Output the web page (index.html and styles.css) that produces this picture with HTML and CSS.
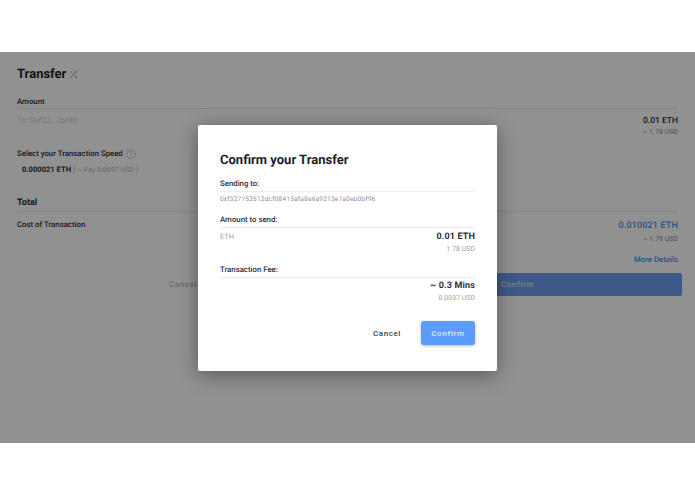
FILE: index.html
```html
<!DOCTYPE html>
<html lang="en">
<head>
  <meta charset="UTF-8">
  <title>Confirm your Transfer</title>
  <link rel="stylesheet" href="styles.css">
</head>
<body>
  <div class="band"></div>
  <main class="screen">
    <section class="page">
      <h1 class="page-title"><span class="title-text">Transfer</span>
        <svg class="shuffle" viewBox="0 0 24 24" width="11" height="11"><path d="M10.6 9.2 5.4 4 4 5.4l5.2 5.2 1.4-1.4zM14.5 4l2 2L4 18.6 5.4 20 18 7.5l2 2V4h-5.5zm.3 9.4-1.4 1.4 3.1 3.1-2 2.1H20v-5.5l-2 2-3.2-3.1z"/></svg>
      </h1>
      <div class="label ruled">Amount</div>
      <div class="row amount-row">
        <span class="to">To: 0xf32...0bf96</span>
        <div class="right">
          <div class="eth">0.01 ETH</div>
          <div class="usd">~ 1.78 USD</div>
        </div>
      </div>
      <div class="label speed-label">Select your Transaction Speed
        <svg class="help" viewBox="0 0 24 24" width="10" height="10"><circle cx="12" cy="12" r="10.5"/><path d="M8.8 9.4a3.2 3.2 0 1 1 4.8 2.8c-1 .6-1.6 1.2-1.6 2.4M12 16.6v2"/></svg>
      </div>
      <div class="speed"><b>0.000021 ETH</b> <span>( ~ Pay 0.0037 USD )</span></div>
      <div class="total ruled">Total</div>
      <div class="row cost-row">
        <span class="label">Cost of Transaction</span>
        <div class="right">
          <div class="eth blue">0.010021 ETH</div>
          <div class="usd">~ 1.79 USD</div>
          <a class="more">More Details</a>
        </div>
      </div>
      <div class="actions">
        <span class="ghost">Cancel</span>
        <span class="wide">Confirm</span>
      </div>
    </section>

    <div class="scrim"></div>

    <section class="modal">
      <h2>Confirm your Transfer</h2>
      <div class="m-label">Sending to:</div>
      <div class="address">0xf327753512dcf08415afa8a6a9213e7a0eb0bf96</div>
      <div class="m-label">Amount to send:</div>
      <div class="m-row">
        <span class="unit">ETH</span>
        <div class="m-right">
          <div class="m-big">0.01 ETH</div>
          <div class="m-small">1.78 USD</div>
        </div>
      </div>
      <div class="m-label">Transaction Fee:</div>
      <div class="m-row fee">
        <span></span>
        <div class="m-right">
          <div class="m-big">~ 0.3 Mins</div>
          <div class="m-small">0.0037 USD</div>
        </div>
      </div>
      <div class="m-actions">
        <button class="m-cancel">Cancel</button>
        <button class="m-confirm">Confirm</button>
      </div>
    </section>
  </main>
  <div class="band-bottom"></div>
</body>
</html>
```
FILE: styles.css
```css
html, body { margin: 0; padding: 0; }
body { width: 695px; height: 494px; overflow: hidden; background: #fff; font-family: Roboto, "Liberation Sans", sans-serif; color: #1c1f2b; text-rendering: geometricPrecision; }
.band { height: 52px; }
.band-bottom { height: 51px; }

.screen { position: relative; height: 391px; overflow: hidden; background: #fff; }
.page { padding: 15px 17px 0; }
.page-title { margin: 0; height: 15px; font-size: 13px; line-height: 15px; font-weight: 700; display: flex; align-items: center; gap: 2px; }
.shuffle { fill: #bbb; }
.label { font-size: 7.8px; line-height: 11px; font-weight: 500; color: #2b2e38; }
.ruled { border-bottom: 1px solid #e8e8e8; }
.page > .label.ruled { margin-top: 14px; padding-bottom: 1px; }
.row { display: flex; justify-content: space-between; align-items: flex-start; }
.amount-row { margin-top: 6px; height: 33px; }
.to { font-size: 7.8px; line-height: 12px; letter-spacing: .1px; color: #d0d0d0; }
.right { text-align: right; }
.eth { font-size: 8.5px; line-height: 12px; font-weight: 500; color: #2b2e38; }
.eth.blue { color: #4a8fe8; font-size: 9px; line-height: 13px; font-weight: 500; letter-spacing: .15px; }
.usd { font-size: 6.8px; line-height: 11px; letter-spacing: .1px; color: #888; }
.eth.blue + .usd { margin-top: 1px; }
.more { display: block; margin-top: 9px; font-size: 7.8px; line-height: 11px; font-weight: 500; color: #4a8fe8; }
.speed-label { display: flex; align-items: center; gap: 3px; }
.help { fill: none; stroke: #b0b0b0; stroke-width: 1.6; }
.speed { margin: 5px 0 0 5px; font-size: 7.6px; line-height: 11px; color: #b0b0b0; }
.speed b { font-weight: 700; color: #2b2e38; }
.speed span { font-size: 6.8px; letter-spacing: .15px; }
.total { margin-top: 21px; font-size: 9px; line-height: 13px; font-weight: 700; padding-bottom: 1px; color: #2b2e38; }
.cost-row { margin-top: 8px; }
.cost-row > .label { margin-top: -1px; }
.actions { display: flex; align-items: center; margin: 8px -4px 0 0; height: 23px; }
.ghost { width: 152px; margin-left: 152px; font-size: 8px; font-weight: 500; letter-spacing: .6px; color: #bbb; }
.wide { flex: 1; height: 23px; background: #6d9df0; border-radius: 2px; color: #d8e4f8; font-size: 8px; font-weight: 500; letter-spacing: .6px; line-height: 23px; padding-left: 180px; box-sizing: border-box; }

.scrim { position: absolute; inset: 0; background: rgba(0, 0, 0, .43); }

.modal { position: absolute; left: 198px; top: 73px; width: 299px; height: 246px; box-sizing: border-box; padding: 28px 22px 0; background: #fff; border-radius: 2px; box-shadow: 0 4px 20px rgba(0, 0, 0, .4); }
.modal h2 { margin: 0 0 9px; font-size: 13px; line-height: 16px; font-weight: 700; color: #1c1f2b; }
.m-label { font-size: 7.8px; line-height: 11px; font-weight: 500; color: #2b2e38; padding-bottom: 2px; border-bottom: 1px solid #eceef0; }
.address { margin: 2px 0 10px; font-size: 6.5px; line-height: 10px; letter-spacing: .22px; color: #8a8d96; }
.m-row { display: flex; justify-content: space-between; align-items: flex-start; margin: 3px 0 9px; }
.m-row.fee { margin: 2px 0 0; }
.unit { font-size: 7.5px; line-height: 12px; color: #9a9da5; }
.m-right { text-align: right; }
.m-big { font-size: 9px; line-height: 13px; font-weight: 700; letter-spacing: .15px; color: #2b2e38; }
.m-small { font-size: 6.8px; line-height: 11px; letter-spacing: .1px; color: #9a9da5; }
.m-actions { display: flex; justify-content: flex-end; align-items: center; gap: 20px; margin-top: 17px; }
.m-actions button { border: 0; font-family: inherit; font-size: 8px; font-weight: 500; letter-spacing: .6px; padding: 0; }
.m-cancel { background: none; color: #3b3e48; }
.m-confirm { width: 54px; height: 24px; border-radius: 3px; background: #5a9cfa; color: #dfeafc; box-shadow: 0 1px 3px rgba(0, 0, 0, .3); }
```
